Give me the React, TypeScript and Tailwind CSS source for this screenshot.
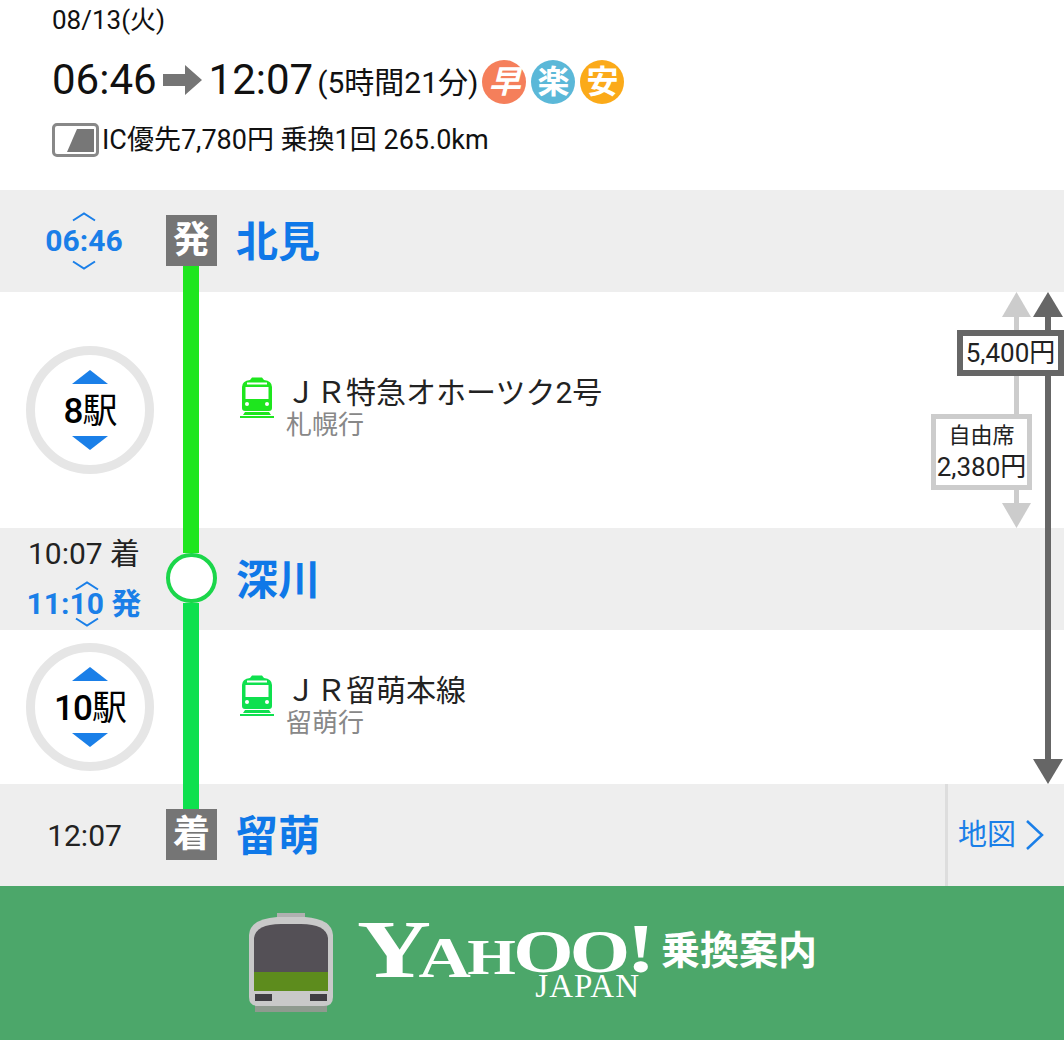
import React from 'react';

const FONT = "font-['Roboto','Noto_Sans_CJK_JP',sans-serif]";

function Chevron(props: { down?: boolean }) {
    return (
        <svg width="26" height="10" viewBox="0 0 26 10" className="block">
            <path
                d={props.down ? 'M2 1.5 L13 8.5 L24 1.5' : 'M2 8.5 L13 1.5 L24 8.5'}
                fill="none"
                stroke="#1a7fe8"
                strokeWidth="2"
            />
        </svg>
    );
}

function Triangle(props: { down?: boolean; width: number; height: number; color: string }) {
    const { down, width, height, color } = props;
    return (
        <svg width={width} height={height} viewBox="0 0 30 25" preserveAspectRatio="none" className="block shrink-0">
            <polygon points={down ? '0,0 30,0 15,25' : '15,0 30,25 0,25'} fill={color} />
        </svg>
    );
}

function Badge(props: { label: string; color: string; italic?: boolean }) {
    return (
        <div
            className={`w-[44px] h-[44px] rounded-full flex items-center justify-center text-white font-bold text-[32px] leading-none ${props.italic ? 'italic' : ''}`}
            style={{ backgroundColor: props.color }}
        >
            {props.label}
        </div>
    );
}

function StopsCircle(props: { count: number }) {
    return (
        <div className="w-[128px] h-[128px] rounded-full border-[9px] border-[#e6e6e6] flex flex-col items-center justify-center text-black">
            <Triangle width={36} height={14} color="#1a7fe8" />
            <div className="h-[52px] pt-[2px] text-[35px] leading-[52px] tracking-[-1px]">
                <span className="font-medium">{props.count}</span>駅
            </div>
            <Triangle down width={36} height={14} color="#1a7fe8" />
        </div>
    );
}

function TrainIcon(props: { color: string }) {
    return (
        <svg width="36" height="42" viewBox="0 0 36 42" className="block shrink-0">
            <path
                d="M3 10 Q3 4 11 3 L13 0.5 H23 L25 3 Q33 4 33 10 V31 Q33 34 30 34 H6 Q3 34 3 31 Z"
                fill={props.color}
            />
            <rect x="6.5" y="10" width="23" height="12" fill="#fff" />
            <rect x="8" y="5.5" width="20" height="2" fill="#fff" />
            <circle cx="8" cy="27" r="2" fill="#fff" />
            <circle cx="28" cy="27" r="2" fill="#fff" />
            <path d="M6 35 H30 L32 38 H4 Z M1 39 H35 V41 H1 Z" fill={props.color} />
        </svg>
    );
}

function StationBadge(props: { label: string }) {
    return (
        <div className="w-[51px] h-[51px] bg-[#757575] flex items-center justify-center text-white font-bold text-[37px] leading-none shrink-0">
            {props.label}
        </div>
    );
}

function StationName(props: { name: string }) {
    return <div className="pl-[19px] pt-[4px] text-[#0f78e8] font-bold text-[42px] leading-none">{props.name}</div>;
}

function Section(props: {
    height: number;
    count: number;
    circleTop: number;
    infoTop: number;
    line: string;
    title: string;
    dest: string;
}) {
    return (
        <div className="flex bg-white" style={{ height: props.height }}>
            <div className="w-[166px] pl-[26px]" style={{ paddingTop: props.circleTop }}>
                <StopsCircle count={props.count} />
            </div>
            <div className="w-[51px]">
                <div className="w-4 h-full ml-[17px]" style={{ backgroundColor: props.line }} />
            </div>
            <div className="pl-[22px] flex items-start gap-[11px]" style={{ paddingTop: props.infoTop }}>
                <TrainIcon color={props.line} />
                <div className="flex flex-col pt-[2px]">
                    <div className="text-[30px] leading-[32px] -mt-[2px] text-[#222]">{props.title}</div>
                    <div className="text-[26px] leading-[32px] text-[#888]">{props.dest}</div>
                </div>
            </div>
        </div>
    );
}

function YahooLogo() {
    return (
        <div className="w-[295px] flex flex-col text-white font-['Liberation_Serif',serif] font-bold ml-[23px] shrink-0">
            <div className="flex items-baseline h-[60px] leading-none scale-x-125 origin-left -mt-[14px]">
                <span className="text-[82px] tracking-[-10px]">Y</span>
                <span className="text-[58px] tracking-[-3px]">A</span>
                <span className="text-[50px] tracking-[-2px] relative -top-[3px]">H</span>
                <span className="text-[62px] tracking-[-3px] relative -top-[5px]">OO</span>
                <span className="text-[70px] relative -top-[5px]">!</span>
            </div>
            <div className="text-[33px] leading-none font-normal self-end pr-[12px] mt-[1px] tracking-[1px]">JAPAN</div>
        </div>
    );
}

function LogoTrain() {
    return (
        <svg width="86" height="100" viewBox="0 0 86 100" className="block shrink-0">
            <rect x="29" y="0" width="28" height="6" fill="#b0b0b0" />
            <rect x="7" y="92" width="72" height="7" fill="#8f9a8f" />
            <path d="M1 22 Q2 6 29 4 H57 Q84 6 85 22 V84 Q85 93 76 93 H10 Q1 93 1 84 Z" fill="#c9c9c9" />
            <path d="M6 25 Q8 11 33 11 H53 Q78 11 80 25 V59 H6 Z" fill="#545056" />
            <rect x="6" y="59" width="74" height="19" fill="#5d8c1d" />
            <rect x="7" y="81" width="17" height="7" fill="#3f3d42" />
            <rect x="62" y="81" width="17" height="7" fill="#3f3d42" />
        </svg>
    );
}

export default function App() {
    return (
        <div className={`w-[1064px] h-[1040px] overflow-hidden bg-white ${FONT}`}>
            <div className="h-[190px] pl-[52px] text-[#111]">
                <div className="text-[26px] leading-[40px]">08/13(火)</div>
                <div className="flex items-center h-[64px] mt-[8px]">
                    <span className="text-[42px] leading-none">06:46</span>
                    <svg width="40" height="30" viewBox="0 0 40 30" className="mx-[6px]">
                        <polygon points="0,9 22,9 22,0 39,15 22,30 22,21 0,21" fill="#757575" />
                    </svg>
                    <span className="text-[42px] leading-none">12:07</span>
                    <span className="text-[30px] leading-none ml-[4px] mt-[6px]">(5時間21分)</span>
                    <div className="flex gap-[5px] ml-[4px] mt-[4px]">
                        <Badge label="早" color="#f57f5b" italic />
                        <Badge label="楽" color="#5bb8d8" />
                        <Badge label="安" color="#fbaa19" />
                    </div>
                </div>
                <div className="flex items-center mt-[11px] text-[27px] leading-none">
                    <div className="w-[47px] h-[34px] rounded-[5px] border-[3px] border-[#888] flex items-center justify-end pr-[1px] mr-[3px]">
                        <svg width="36" height="26" viewBox="0 0 36 26">
                            <polygon points="18,2 35,2 35,25 8,25" fill="#777" />
                        </svg>
                    </div>
                    <span>IC優先7,780円 乗換1回 265.0km</span>
                </div>
            </div>

            <div className="flex h-[102px] bg-[#eee]">
                <div className="w-[166px] flex flex-col items-center pt-[22px] pl-[2px] text-[#1a7fe8]">
                    <Chevron />
                    <div className="text-[30px] font-bold leading-[38px]">06:46</div>
                    <Chevron down />
                </div>
                <div className="w-[51px] flex flex-col pt-[25px]">
                    <StationBadge label="発" />
                    <div className="w-4 flex-1 ml-[17px] bg-[#1ee61e]" />
                </div>
                <div className="h-[102px] flex items-center">
                    <StationName name="北見" />
                </div>
            </div>

            <div className="relative">
                <Section
                    height={236}
                    count={8}
                    circleTop={54}
                    infoTop={85}
                    line="#1ee61e"
                    title="ＪＲ特急オホーツク2号"
                    dest="札幌行"
                />

                <div className="flex h-[102px] bg-[#eee]">
                    <div className="w-[166px] flex flex-col items-center pt-[1px] pl-[2px] text-[30px] leading-[50px]">
                        <div className="text-[#222]">10:07 着</div>
                        <div className="relative text-[#1a7fe8] font-bold">
                            11:10 発
                            <div className="absolute left-[47px] top-[2px]">
                                <Chevron />
                            </div>
                            <div className="absolute left-[47px] top-[38px]">
                                <Chevron down />
                            </div>
                        </div>
                    </div>
                    <div className="w-[51px] flex flex-col">
                        <div className="w-4 h-[25px] ml-[17px] bg-[#1ee61e]" />
                        <div className="w-[51px] h-[50px] shrink-0 rounded-full bg-white border-[4px] border-[#1bd64a]" />
                        <div className="w-4 flex-1 ml-[17px] bg-[#0ee04e]" />
                    </div>
                    <div className="h-[102px] flex items-center">
                        <StationName name="深川" />
                    </div>
                </div>

                <Section
                    height={154}
                    count={10}
                    circleTop={13}
                    infoTop={45}
                    line="#0ee04e"
                    title="ＪＲ留萌本線"
                    dest="留萌行"
                />

                <div className="absolute left-[1002px] top-0 w-[29px] h-[236px] flex flex-col items-center">
                    <Triangle width={29} height={25} color="#ccc" />
                    <div className="w-[5px] flex-1 bg-[#ccc]" />
                    <Triangle down width={29} height={25} color="#ccc" />
                </div>
                <div className="absolute left-[931px] top-[122px] w-[101px] h-[76px] bg-white border-[5px] border-[#ccc] flex flex-col items-center justify-center text-[#222]">
                    <div className="text-[22px] leading-[30px]">自由席</div>
                    <div className="text-[26px] leading-[32px] whitespace-nowrap">2,380円</div>
                </div>
                <div className="absolute left-[1033px] top-0 w-[30px] h-[492px] flex flex-col items-center">
                    <Triangle width={30} height={25} color="#666" />
                    <div className="w-[6px] flex-1 bg-[#666]" />
                    <Triangle down width={30} height={25} color="#666" />
                </div>
                <div className="absolute left-[957px] top-[38px] w-[107px] h-[46px] bg-white border-[6px] border-[#666] flex items-center justify-center text-[26px] text-[#222] whitespace-nowrap">
                    5,400円
                </div>
            </div>

            <div className="flex h-[102px] bg-[#eee]">
                <div className="w-[166px] flex items-center justify-center pl-[3px] text-[30px] text-[#222]">12:07</div>
                <div className="w-[51px] flex flex-col">
                    <div className="w-4 h-[25px] ml-[17px] bg-[#0ee04e]" />
                    <StationBadge label="着" />
                </div>
                <div className="flex-1 flex items-center">
                    <StationName name="留萌" />
                </div>
                <div className="w-[119px] border-l-[3px] border-[#ddd] flex items-center pl-[10px] text-[#1a7fe8]">
                    <span className="text-[29px] leading-none">地図</span>
                    <svg width="20" height="32" viewBox="0 0 20 32" className="ml-[9px]">
                        <path d="M2 2 L17 16 L2 30" fill="none" stroke="#1a7fe8" strokeWidth="2.5" />
                    </svg>
                </div>
            </div>

            <div className="h-[154px] bg-[#4ca76a] flex items-center pl-[248px]">
                <LogoTrain />
                <YahooLogo />
                <div className="text-white font-bold text-[39px] leading-none ml-[9px] -mt-[24px] whitespace-nowrap">乗換案内</div>
            </div>
        </div>
    );
}
